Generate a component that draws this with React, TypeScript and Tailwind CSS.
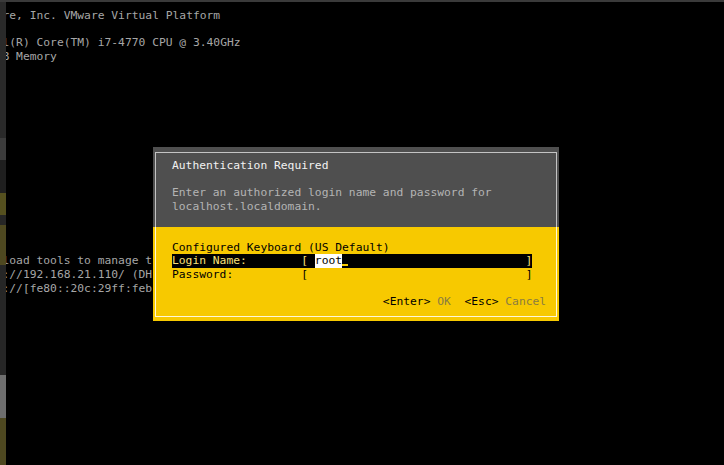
const consoleLines = [
  're, Inc. VMware Virtual Platform',
  '',
  'l(R) Core(TM) i7-4770 CPU @ 3.40GHz',
  'B Memory',
  '', '', '', '', '', '', '', '', '', '', '', '', '', '',
  'load tools to manage t',
  '://192.168.21.110/ (DH',
  '://[fe80::20c:29ff:feb',
]

function SideStrip() {
  return (
    <div className="w-[6px] shrink-0 flex flex-col">
      <div className="h-[136px] bg-[#2a2a2a]" />
      <div className="h-[22px] bg-[#3c3c3c]" />
      <div className="h-[33px] bg-[#1f1f1f]" />
      <div className="h-[22px] bg-[#55501f]" />
      <div className="h-[10px] bg-[#262626]" />
      <div className="h-[40px] bg-[#4e4820]" />
      <div className="h-[110px] bg-[#262626]" />
      <div className="h-[43px] bg-[#6e6e6e]" />
      <div className="flex-1 bg-[#4e4820]" />
    </div>
  )
}

function AuthDialog() {
  return (
    <div className="absolute left-[153px] top-[147px] w-[406px] flex flex-col font-['DejaVu_Sans_Mono',monospace] text-[11.3px] leading-[13.63px] whitespace-pre">
      <div className="bg-[#4f4f4f] px-[2px] pt-[5px]">
        <div className="h-[75px] border-x border-t border-[#c4c4c4] pl-[16px] pt-[6px]">
          <div className="text-[#f2f2f2]">Authentication Required</div>
          <div>&nbsp;</div>
          <div className="text-[#b4b4b4]">Enter an authorized login name and password for</div>
          <div className="text-[#b4b4b4]">localhost.localdomain.</div>
        </div>
      </div>
      <div className="bg-[#f7c900] px-[2px] pb-[4px]">
        <div className="h-[90px] border-x border-b border-[#fff8d8] pl-[16px] pt-[13.63px] text-black">
          <div>Configured Keyboard (US Default)</div>
          <div className="flex w-[360.4px] bg-black text-[#f9e07a]">
            <span>{'Login Name:        [ '}</span>
            <span className="bg-white text-black">root</span>
            <span className="w-[6.8px] flex items-end pb-[2px]">
              <span className="block w-[6px] h-[1.5px] bg-[#f7c900]" />
            </span>
            <span className="flex-1" />
            <span>]</span>
          </div>
          <div>{'Password:          [' + ' '.repeat(32) + ']'}</div>
          <div>&nbsp;</div>
          <div>
            {' '.repeat(31) + '<Enter> '}
            <span className="text-[#8a7c40]">OK</span>
            {'  <Esc> '}
            <span className="text-[#8a7c40]">Cancel</span>
          </div>
        </div>
      </div>
    </div>
  )
}

export default function App() {
  return (
    <div className="relative w-[724px] h-[465px] overflow-hidden bg-black flex flex-col">
      <div className="h-[2px] bg-[#3a3a3a]" />
      <div className="flex flex-1 min-h-0">
        <SideStrip />
        <div className="flex-1 overflow-hidden pt-[7.2px]">
          <div className="-ml-[3.5px] font-['DejaVu_Sans_Mono',monospace] text-[11.3px] leading-[13.63px] text-[#a6a6a6] whitespace-pre">
            {consoleLines.map((line, i) => (
              <div key={i}>{line || '\u00a0'}</div>
            ))}
          </div>
        </div>
      </div>
      <AuthDialog />
    </div>
  )
}
